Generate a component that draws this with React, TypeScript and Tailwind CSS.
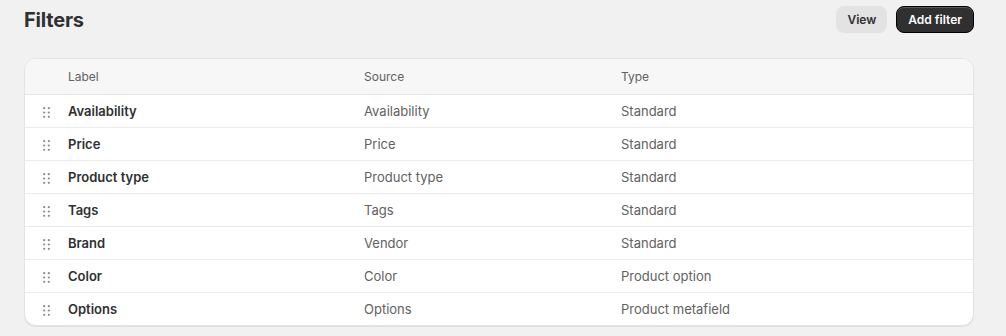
const filters = [
  { label: "Availability", source: "Availability", type: "Standard" },
  { label: "Price", source: "Price", type: "Standard" },
  { label: "Product type", source: "Product type", type: "Standard" },
  { label: "Tags", source: "Tags", type: "Standard" },
  { label: "Brand", source: "Vendor", type: "Standard" },
  { label: "Color", source: "Color", type: "Product option" },
  { label: "Options", source: "Options", type: "Product metafield" },
];

// small 2x3 dot grip used for drag handles
function DragHandle() {
  return (
    <svg width="7" height="11" viewBox="0 0 7 11" className="fill-[#8a8a8a]">
      <circle cx="1.2" cy="1.2" r="1.1" />
      <circle cx="5.8" cy="1.2" r="1.1" />
      <circle cx="1.2" cy="5.5" r="1.1" />
      <circle cx="5.8" cy="5.5" r="1.1" />
      <circle cx="1.2" cy="9.8" r="1.1" />
      <circle cx="5.8" cy="9.8" r="1.1" />
    </svg>
  );
}

export default function App() {
  return (
    <div className="min-h-[336px] bg-[#f1f1f1] px-6 pt-[6px] font-['Inter',sans-serif] text-[13px] text-[#303030]">
      <header className="flex items-center justify-between h-[27px]">
        <h1 className="text-[20px] font-bold text-[#303030] tracking-[-0.2px]">Filters</h1>
        <div className="flex gap-[9px] mr-[8px]">
          <button className="h-[27px] px-[11px] rounded-lg bg-[#e3e3e3] text-[12px] font-semibold text-[#303030]">
            View
          </button>
          <button className="h-[27px] px-[11px] rounded-lg bg-[#303030] border border-black text-[12px] font-semibold text-white shadow-[inset_0_1px_0_rgba(255,255,255,0.2)]">
            Add filter
          </button>
        </div>
      </header>

      <section className="mt-[25px] mr-[8px] rounded-xl border border-[#e3e3e3] bg-white overflow-hidden shadow-[0_1px_0_rgba(0,0,0,0.07)]">
        <div className="grid grid-cols-[43px_296px_257px_1fr] h-[36px] items-center bg-[#f7f7f7] border-b border-[#e3e3e3] text-[12px] text-[#616161]">
          <span />
          <span>Label</span>
          <span>Source</span>
          <span>Type</span>
        </div>
        {filters.map((f, i) => (
          <div
            key={f.label}
            className={`grid grid-cols-[43px_296px_257px_1fr] items-center pt-[2px] ${
              i < filters.length - 1 ? "h-[33px] border-b border-[#ebebeb]" : "h-[32px]"
            }`}
          >
            <span className="flex justify-center">
              <DragHandle />
            </span>
            <span className="font-semibold text-[#303030]">{f.label}</span>
            <span className="text-[#616161]">{f.source}</span>
            <span className="text-[#616161]">{f.type}</span>
          </div>
        ))}
      </section>
    </div>
  );
}
